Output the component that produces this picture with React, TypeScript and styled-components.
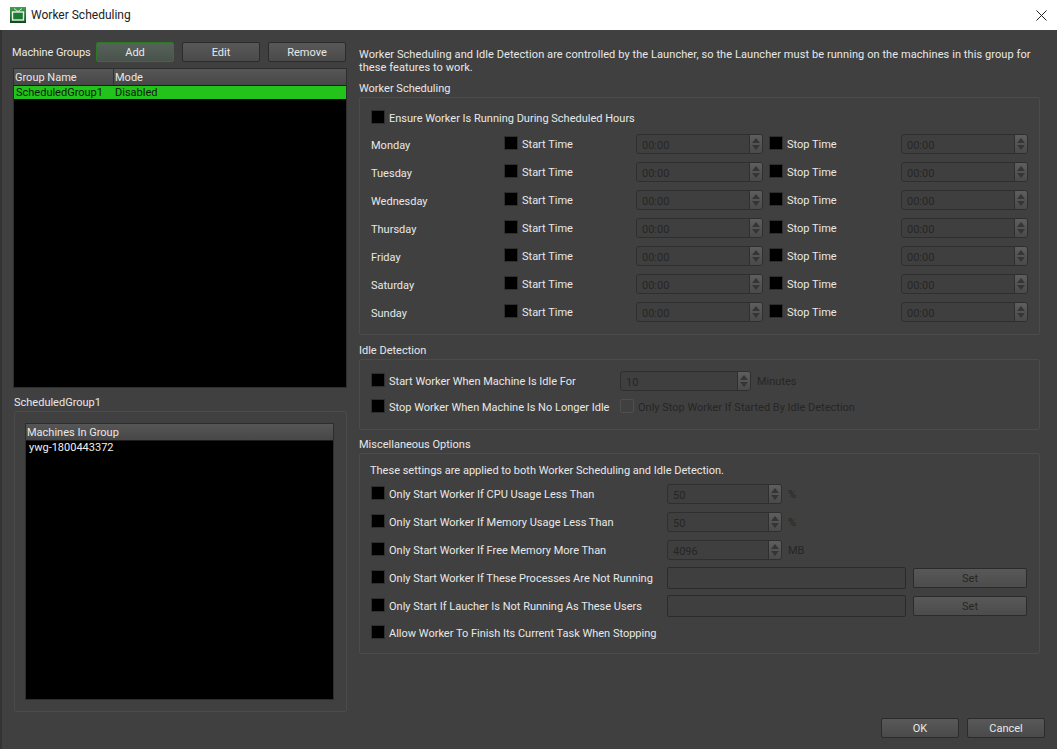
import React from 'react';
import styled, { createGlobalStyle } from 'styled-components';

const Global = createGlobalStyle`
  html, body { margin: 0; padding: 0; background: #404040; }
  * { box-sizing: border-box; }
  #root { width: 1057px; height: 749px; overflow: hidden; }
`;

const Window = styled.div`
  width: 1057px;
  height: 749px;
  display: flex;
  flex-direction: column;
  background: #404040;
  color: #e8e8e8;
  font-family: Roboto, "Liberation Sans", sans-serif;
  font-size: 11px;
  line-height: 14px;
  white-space: nowrap;
`;

const TitleBar = styled.div`
  height: 30px;
  flex: none;
  background: #fff;
  color: #222;
  display: flex;
  align-items: center;
  padding: 0 10px 0 10px;
  font-size: 12px;
  gap: 5px;
`;

const TitleText = styled.span`
  flex: 1;
`;

const Content = styled.div`
  flex: 1;
  display: flex;
  gap: 12px;
  padding: 11px 17px 0 12px;
  border-left: 2px solid #333;
`;

const LeftColumn = styled.div`
  width: 335px;
  flex: none;
  display: flex;
  flex-direction: column;
  margin-left: -2px;
`;

const RightColumn = styled.div`
  flex: 1;
  min-width: 0;
  display: flex;
  flex-direction: column;
`;

const GroupToolbar = styled.div`
  height: 21px;
  display: flex;
  align-items: center;
  gap: 8px;
`;

const ToolbarLabel = styled.span`
  width: 76px;
  padding-top: 2px;
  letter-spacing: -0.1px;
`;

const Button = styled.div<{ $active?: boolean; $dim?: boolean; $w?: number }>`
  width: ${p => p.$w ?? 78}px;
  height: 20px;
  flex: none;
  display: flex;
  align-items: center;
  justify-content: center;
  padding-top: 2px;
  border-radius: 2px;
  border: 1px solid ${p => (p.$active ? '#2a7a25' : '#2b2b2b')};
  background: ${p => (p.$active ? 'linear-gradient(#56625a, #49534c)' : p.$dim ? 'linear-gradient(#585858, #4c4c4c)' : 'linear-gradient(#585858, #4a4a4a)')};
  color: ${p => (p.$dim ? '#262626' : '#e8e8e8')};
`;

const ListFrame = styled.div<{ $h: number }>`
  height: ${p => p.$h}px;
  background: #000;
  border: 1px solid #2d2d2d;
  display: flex;
  flex-direction: column;
`;

const GroupList = styled(ListFrame)`
  margin: 6px 0 0 1px;
`;

const ListHeader = styled.div<{ $cols: string }>`
  height: 17px;
  flex: none;
  display: grid;
  grid-template-columns: ${p => p.$cols};
  background: linear-gradient(#565656, #474747);
  border-bottom: 1px solid #1d1d1d;
`;

const HeaderCell = styled.span`
  display: flex;
  align-items: center;
  padding: 2px 0 0 1px;
  & + & { border-left: 1px solid #333; }
`;

const SelectedRow = styled.div<{ $cols: string }>`
  height: 13px;
  display: grid;
  grid-template-columns: ${p => p.$cols};
  align-items: center;
  background: #22c41c;
  color: #0c1a0b;
  span { padding: 0 0 0 2px; }
`;

const ListItem = styled.div`
  height: 16px;
  padding: 0 0 0 3px;
  color: #f0f0f0;
`;

const SectionTitle = styled.div<{ $top?: number }>`
  height: 14px;
  margin-top: ${p => p.$top ?? 0}px;
  margin-bottom: 2px;
  padding-top: 1px;
`;

const MachinesTitle = styled(SectionTitle)`
  padding-left: 2px;
`;

const GroupBox = styled.div<{ $h: number }>`
  height: ${p => p.$h}px;
  border: 1px solid #4b4b4b;
  border-radius: 2px;
  padding: 11px 11px 0 10px;
`;

const MachinesBox = styled(GroupBox)`
  margin-left: 2px;
  padding: 11px 12px 11px 10px;
`;

const MiscBox = styled(GroupBox)`
  padding-top: 9px;
`;

const Intro = styled.div`
  padding-top: 7px;
  height: 40px;
  line-height: 13px;
  letter-spacing: 0.08px;
`;

const Row = styled.div<{ $h?: number }>`
  display: flex;
  align-items: center;
  height: ${p => p.$h ?? 28}px;
`;

const EnsureRow = styled(Row)`
  margin-bottom: 3px;
`;

const MiscNote = styled(Row)`
  margin-bottom: 3px;
  padding-top: 2px;
`;

const DayRow = styled.div`
  display: grid;
  grid-template-columns: 134px 132px 133px 132px 126px;
  align-items: center;
  height: 28px;
`;

const DayName = styled.span`
  padding-top: 4px;
  padding-left: 1px;
`;

const CheckWrap = styled.label<{ $w?: number; $dim?: boolean }>`
  display: flex;
  align-items: center;
  gap: 4px;
  width: ${p => (p.$w ? `${p.$w}px` : 'auto')};
  flex: none;
  color: ${p => (p.$dim ? '#262626' : 'inherit')};
`;

const CheckText = styled.span`
  padding-top: 2px;
`;

const CheckBox = styled.span<{ $dim?: boolean; $inset?: boolean }>`
  width: 14px;
  height: 14px;
  flex: none;
  margin: 0 0 2px ${p => (p.$inset ? '1px' : '0')};
  background: ${p => (p.$dim ? 'transparent' : '#000')};
  border: 1px solid ${p => (p.$dim ? '#4f4f4f' : '#2e2e2e')};
  border-radius: ${p => (p.$dim ? '2px' : '0')};
`;

const Spin = styled.div<{ $w: number }>`
  width: ${p => p.$w}px;
  height: 20px;
  flex: none;
  display: flex;
  border: 1px solid #2f2f2f;
  border-radius: 3px;
  background: #3f3f3f;
  color: #262626;
`;

const SpinValue = styled.span`
  flex: 1;
  padding: 4px 0 0 5px;
`;

const SpinButtons = styled.div`
  width: 13px;
  display: flex;
  flex-direction: column;
  align-items: center;
  justify-content: center;
  gap: 2px;
  background: linear-gradient(#5e5e5e, #4a4a4a);
  border-left: 1px solid #2f2f2f;
  border-radius: 0 2px 2px 0;
`;

const Arrow = styled.i<{ $down?: boolean }>`
  width: 0;
  height: 0;
  border-left: 4px solid transparent;
  border-right: 4px solid transparent;
  ${p => (p.$down ? 'border-top: 5px solid #353535;' : 'border-bottom: 5px solid #353535;')}
`;

const Unit = styled.span`
  color: #262626;
  margin-left: 6px;
  padding-top: 2px;
`;

const PathInput = styled.div`
  width: 239px;
  height: 22px;
  flex: none;
  border: 1px solid #2b2b2b;
  border-radius: 2px;
  background: #3f3f3f;
  margin-right: 7px;
`;

const Footer = styled.div`
  display: flex;
  justify-content: flex-end;
  gap: 8px;
  margin: auto -5px 0 0;
  padding-bottom: 11px;
`;

const Spinner = ({ value, w }: { value: string; w: number }) => (
  <Spin $w={w}>
    <SpinValue>{value}</SpinValue>
    <SpinButtons>
      <Arrow />
      <Arrow $down />
    </SpinButtons>
  </Spin>
);

const Check = ({ label, w, inset, dim }: { label: string; w?: number; inset?: boolean; dim?: boolean }) => (
  <CheckWrap $w={w} $dim={dim}>
    <CheckBox $inset={inset} $dim={dim} />
    <CheckText>{label}</CheckText>
  </CheckWrap>
);

const days = ['Monday', 'Tuesday', 'Wednesday', 'Thursday', 'Friday', 'Saturday', 'Sunday'];
const groupCols = '99px 1fr';

const miscSpins = [
  { label: 'Only Start Worker If CPU Usage Less Than', value: '50', unit: '%' },
  { label: 'Only Start Worker If Memory Usage Less Than', value: '50', unit: '%' },
  { label: 'Only Start Worker If Free Memory More Than', value: '4096', unit: 'MB' },
];

const miscPaths = [
  'Only Start Worker If These Processes Are Not Running',
  'Only Start If Laucher Is Not Running As These Users',
];

export default function App() {
  return (
    <>
      <Global />
      <Window>
        <TitleBar>
          <svg width="16" height="16" viewBox="0 0 16 16">
            <defs>
              <linearGradient id="tv" x1="0" y1="0" x2="0" y2="1">
                <stop offset="0" stopColor="#3fa34d" />
                <stop offset="1" stopColor="#0d4a1c" />
              </linearGradient>
            </defs>
            <rect width="16" height="16" fill="url(#tv)" />
            <path d="M4 1.5l4 3 4-3" stroke="#d8e8d8" strokeWidth="1" fill="none" />
            <rect x="2.5" y="5" width="11" height="8" fill="#1d7a33" stroke="#e8f2e8" strokeWidth="1.4" />
          </svg>
          <TitleText>Worker Scheduling</TitleText>
          <svg width="11" height="11" viewBox="0 0 11 11">
            <path d="M.5.5l10 10M10.5.5l-10 10" stroke="#222" strokeWidth="1" />
          </svg>
        </TitleBar>
        <Content>
          <LeftColumn>
            <GroupToolbar>
              <ToolbarLabel>Machine Groups</ToolbarLabel>
              <Button $active>Add</Button>
              <Button>Edit</Button>
              <Button>Remove</Button>
            </GroupToolbar>
            <GroupList $h={320}>
              <ListHeader $cols={groupCols}>
                <HeaderCell>Group Name</HeaderCell>
                <HeaderCell>Mode</HeaderCell>
              </ListHeader>
              <SelectedRow $cols={groupCols}>
                <span>ScheduledGroup1</span>
                <span>Disabled</span>
              </SelectedRow>
            </GroupList>
            <MachinesTitle $top={7}>ScheduledGroup1</MachinesTitle>
            <MachinesBox $h={301}>
              <ListFrame $h={277}>
                <ListHeader $cols="1fr">
                  <HeaderCell>Machines In Group</HeaderCell>
                </ListHeader>
                <ListItem>ywg-1800443372</ListItem>
              </ListFrame>
            </MachinesBox>
          </LeftColumn>
          <RightColumn>
            <Intro>
              Worker Scheduling and Idle Detection are controlled by the Launcher, so the Launcher must be running on the machines in this group for
              <br />
              these features to work.
            </Intro>
            <SectionTitle>Worker Scheduling</SectionTitle>
            <GroupBox $h={238}>
              <EnsureRow $h={18}>
                <Check inset label="Ensure Worker Is Running During Scheduled Hours" />
              </EnsureRow>
              {days.map(day => (
                <DayRow key={day}>
                  <DayName>{day}</DayName>
                  <Check label="Start Time" />
                  <Spinner value="00:00" w={127} />
                  <Check label="Stop Time" />
                  <Spinner value="00:00" w={127} />
                </DayRow>
              ))}
            </GroupBox>
            <SectionTitle $top={8}>Idle Detection</SectionTitle>
            <GroupBox $h={71}>
              <Row $h={20}>
                <Check inset w={250} label="Start Worker When Machine Is Idle For" />
                <Spinner value="10" w={131} />
                <Unit>Minutes</Unit>
              </Row>
              <Row $h={32}>
                <Check inset w={250} label="Stop Worker When Machine Is No Longer Idle" />
                <Check dim label="Only Stop Worker If Started By Idle Detection" />
              </Row>
            </GroupBox>
            <SectionTitle $top={7}>Miscellaneous Options</SectionTitle>
            <MiscBox $h={201}>
              <MiscNote $h={14}>These settings are applied to both Worker Scheduling and Idle Detection.</MiscNote>
              {miscSpins.map(item => (
                <Row key={item.label} $h={28}>
                  <Check inset w={297} label={item.label} />
                  <Spinner value={item.value} w={115} />
                  <Unit>{item.unit}</Unit>
                </Row>
              ))}
              {miscPaths.map(label => (
                <Row key={label} $h={28}>
                  <Check inset w={297} label={label} />
                  <PathInput />
                  <Button $dim $w={114}>Set</Button>
                </Row>
              ))}
              <Row $h={26}>
                <Check inset label="Allow Worker To Finish Its Current Task When Stopping" />
              </Row>
            </MiscBox>
            <Footer>
              <Button>OK</Button>
              <Button>Cancel</Button>
            </Footer>
          </RightColumn>
        </Content>
      </Window>
    </>
  );
}
